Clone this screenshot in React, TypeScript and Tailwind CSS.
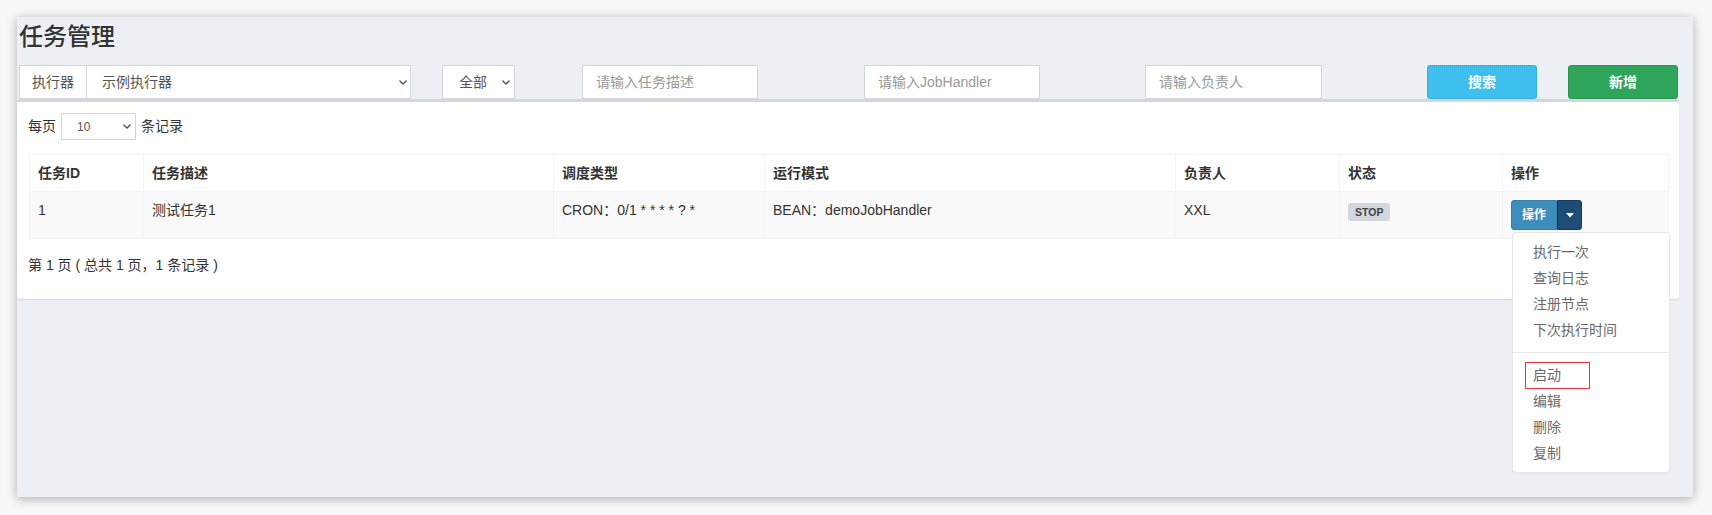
import React from "react";

const Chevron = () => (
  <svg width="8" height="5" viewBox="0 0 8 5" className="shrink-0">
    <path d="M0.9 0.9 L4 4 L7.1 0.9" fill="none" stroke="#555" strokeWidth="1.4" strokeLinecap="round" strokeLinejoin="round" />
  </svg>
);

const Caret = () => (
  <svg width="8" height="5" viewBox="0 0 8 5">
    <path d="M0 0 L8 0 L4 4.5 Z" fill="#fff" />
  </svg>
);

export default function App() {
  const cols = [114, 410, 211, 411, 164, 163, 166];
  const heads = ["任务ID", "任务描述", "调度类型", "运行模式", "负责人", "状态", "操作"];
  const th = "border border-[#f4f4f4] px-[8px] py-[8px] text-left font-bold leading-[20px] align-middle";
  const td = "border border-[#f4f4f4] px-[8px] py-[8px] text-left leading-[20px] align-top";
  const item = "px-[20px] py-[3px] leading-[20px] text-[14px] text-[#6a6a6a] whitespace-nowrap";

  return (
    <div className="w-[1712px] h-[515px] bg-[#f8f8f8] pt-[17px] pl-[17px] font-['Liberation_Sans','Noto_Sans_CJK_SC',sans-serif] text-[14px] text-[#333]">
      <div className="w-[1676px] h-[480px] bg-[#ecf0f5] shadow-[0_2px_10px_rgba(0,0,0,0.3)] flex flex-col">
        <h1 className="h-[48px] pt-[7px] pl-[2px] text-[24px] leading-[26px] text-[#333] font-medium">任务管理</h1>

        {/* filter row */}
        <div className="flex h-[34px] shrink-0">
          <div className="flex ml-[2px]">
            <div className="w-[68px] h-[34px] bg-white border border-[#d2d6de] flex items-center justify-center text-[#555]">执行器</div>
            <div className="w-[324px] h-[34px] bg-white border border-l-0 border-[#d2d6de] flex items-center justify-between pl-[15px] pr-[3px] text-[#555]">
              <span>示例执行器</span>
              <Chevron />
            </div>
          </div>
          <div className="ml-[31px] w-[73px] h-[34px] bg-white border border-[#d2d6de] flex items-center justify-between pl-[16px] pr-[4px] text-[#555]">
            <span>全部</span>
            <Chevron />
          </div>
          <div className="ml-[67px] w-[176px] h-[34px] bg-white border border-[#d2d6de] flex items-center pl-[13px] text-[#999]">请输入任务描述</div>
          <div className="ml-[106px] w-[176px] h-[34px] bg-white border border-[#d2d6de] flex items-center pl-[13px] text-[#999]">请输入JobHandler</div>
          <div className="ml-[105px] w-[177px] h-[34px] bg-white border border-[#d2d6de] flex items-center pl-[13px] text-[#999]">请输入负责人</div>
          <div className="ml-[105px] w-[110px] h-[34px] bg-[#3fbfed] border border-dotted border-[#2b9fcf] rounded-[3px] flex items-center justify-center text-white font-bold">搜索</div>
          <div className="ml-[31px] w-[110px] h-[34px] bg-[#2fa55b] border border-[#279450] rounded-[3px] flex items-center justify-center text-white font-bold">新增</div>
        </div>

        {/* box */}
        <div className="w-[1662px] h-[200px] shrink-0 bg-white border-t-[3px] border-[#d2d6de] rounded-[3px] shadow-[0_1px_1px_rgba(0,0,0,0.1)] pl-[11px] pr-[11px] pt-[11px]">
          <div className="flex items-center h-[27px]">
            <span>每页</span>
            <div className="ml-[5px] w-[75px] h-[27px] border border-[#d2d6de] flex items-center justify-between pl-[15px] pr-[4px] text-[12px] text-[#555]">
              <span>10</span>
              <Chevron />
            </div>
            <span className="ml-[5px]">条记录</span>
          </div>

          <table className="mt-[14px] ml-[1px] w-[1639px] table-fixed border-collapse">
            <colgroup>
              {cols.map((w, i) => (
                <col key={i} style={{ width: w }} />
              ))}
            </colgroup>
            <thead>
              <tr className="bg-white">
                {heads.map((h) => (
                  <th key={h} className={th}>{h}</th>
                ))}
              </tr>
            </thead>
            <tbody>
              <tr className="bg-[#f9f9f9]">
                <td className={td}>1</td>
                <td className={td}>测试任务1</td>
                <td className={td}>CRON：0/1 * * * * ? *</td>
                <td className={td}>BEAN：demoJobHandler</td>
                <td className={td}>XXL</td>
                <td className={td}>
                  <span className="inline-block mt-[3px] h-[18px] leading-[18px] px-[7px] rounded-[3px] bg-[#d2d6de] text-[#444] text-[10.5px] font-bold align-top">STOP</span>
                </td>
                <td className={td}>
                  <div className="relative inline-flex align-top z-10">
                    <div className="w-[46px] h-[30px] bg-[#3c8dbc] border border-[#367fa9] rounded-l-[3px] flex items-center justify-center text-white text-[12px] font-bold">操作</div>
                    <div className="w-[25px] h-[30px] bg-[#1f4c76] border border-[#17395a] rounded-r-[3px] flex items-center justify-center">
                      <Caret />
                    </div>
                    <div className="absolute top-[32px] left-[1px] w-[158px] bg-white border border-[#e6e6e6] rounded-[4px] py-[6px] shadow-[0_1px_2px_rgba(0,0,0,0.04)]">
                      <div className={item}>执行一次</div>
                      <div className={item}>查询日志</div>
                      <div className={item}>注册节点</div>
                      <div className={item}>下次执行时间</div>
                      <div className="h-px my-[9px] bg-[#e8e8e8]" />
                      <div className={item + " relative"}>
                        启动
                        <div className="absolute top-0 left-[12px] w-[65px] h-[27px] border border-[#e8343a]" />
                      </div>
                      <div className={item}>编辑</div>
                      <div className={item}>删除</div>
                      <div className={item}>复制</div>
                    </div>
                  </div>
                </td>
              </tr>
            </tbody>
          </table>

          <div className="mt-[16px] leading-[20px]">第 1 页 ( 总共 1 页，1 条记录 )</div>
        </div>
      </div>
    </div>
  );
}
